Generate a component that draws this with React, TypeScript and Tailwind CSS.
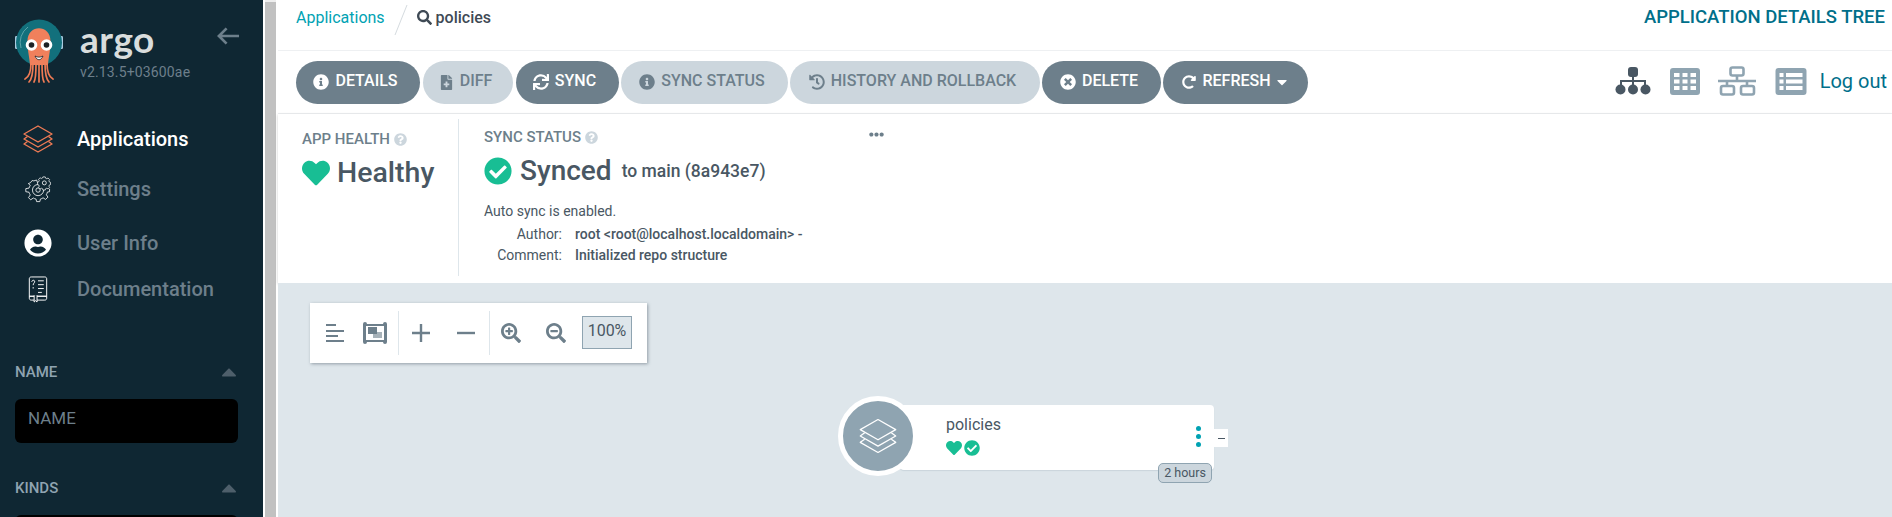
import React from "react";
import { FaInfoCircle, FaFileMedical, FaSync, FaHistory, FaTimesCircle, FaRedoAlt, FaCaretDown, FaSearch, FaHeart, FaCheckCircle, FaUserCircle, FaQuestionCircle, FaCaretUp, FaEllipsisH, FaSearchPlus, FaSearchMinus } from "react-icons/fa";

function Layers({ className, color, sw = 1.4 }: { className?: string; color: string; sw?: number }) {
  return (
    <svg viewBox="0 0 30 30" className={className} fill="none" stroke={color} strokeWidth={sw} strokeLinejoin="round">
      <path d="M15 2 L29 10 L15 18 L1 10 Z" />
      <path d="M4.5 12.5 L1 15 L15 23 L29 15 L25.5 12.5" />
      <path d="M4.5 17.5 L1 20 L15 28 L29 20 L25.5 17.5" />
    </svg>
  );
}

function Logo() {
  return (
    <svg viewBox="0 0 48 64" className="w-[48px] h-[64px] shrink-0">
      <rect x="0" y="17" width="3" height="13" rx="1.2" fill="#a9cbe0" />
      <rect x="45" y="17" width="3" height="13" rx="1.2" fill="#a9cbe0" />
      <circle cx="24" cy="23.5" r="23" fill="#12707c" />
      <path d="M6 29 A19 19 0 0 1 13 8" stroke="#6fb0b5" strokeWidth="0.8" fill="none" />
      <g stroke="#ef7b55" strokeWidth="1.7" fill="none" strokeLinecap="round">
        <path d="M16 44 C16 52 14 58 10 60" />
        <path d="M18 44 C18 54 17 60 14 63" />
        <path d="M21 44 C21 54 21 60 19 63" />
        <path d="M24 44 V63" />
        <path d="M27 44 C27 54 27 60 29 63" />
        <path d="M30 44 C30 54 31 60 34 63" />
        <path d="M32 44 C32 52 34 58 38 60" />
      </g>
      <path d="M12.5 22 C12.5 5 35.5 5 35.5 22 C35.5 32 33.5 38 33 46 H15 C14.5 38 12.5 32 12.5 22 Z" fill="#f0805c" />
      <circle cx="16.5" cy="26" r="5.8" fill="#fff" />
      <circle cx="31.5" cy="26" r="5.8" fill="#fff" />
      <circle cx="16.5" cy="26" r="2.8" fill="#1c2226" />
      <circle cx="31.5" cy="26" r="2.8" fill="#1c2226" />
      <path d="M20 37 C22 42 26 42 28 37 C25.5 38.5 22.5 38.5 20 37 Z" fill="#fff" stroke="#1c2226" strokeWidth="0.8" />
    </svg>
  );
}

function Gear() {
  return (
    <svg viewBox="0 0 30 30" className="w-[27px] h-[28px]" fill="none" stroke="#fff" strokeWidth="0.9" strokeLinejoin="round">
      <path d="M11 6 L14 5 L15 8 C16 8.3 17 8.7 17.6 9.2 L20 8 M4.8 9 L7 11 C6.3 12 5.8 13 5.6 14 L2 14.6 L2 18 L5.6 18.6 C5.9 19.8 6.4 20.8 7 21.6 L5 24.6 L7.4 27 L10.4 25 C11.3 25.6 12.3 26 13.4 26.2 L14 29 L17.6 29 L18.2 26.2 C19.3 25.9 20.3 25.4 21.2 24.8 L24 26.6 L26.6 24 L24.8 21.4 C25.4 20.4 25.8 19.4 26 18.4 L28.4 18 L28.4 14.8" />
      <path d="M11 6 L9 5.6 L7.2 8 L4.8 9" />
      <circle cx="15.6" cy="16.2" r="6.2" />
      <circle cx="15.6" cy="16.2" r="2.4" />
      <path d="M21 1.2 h3 l.4 1.6 1.6 .7 1.5-.9 2 2-.9 1.5 .7 1.6 1.4 .4 v2.8 l-1.4 .4 -.7 1.6 .9 1.5 -2 2 -1.5-.9 -1.6 .7 -.4 1.6 h-3 l-.4-1.6 -1.6-.7 -1.5 .9 -2-2 .9-1.5 -.7-1.6 -1.4-.4 V7.8 l1.4-.4 .7-1.6 -.9-1.5 2-2 1.5 .9 1.6-.7 z" transform="translate(2.5 .5) scale(.88)" fill="#0f2733" />
      <circle cx="22.6" cy="8.2" r="2.2" />
    </svg>
  );
}

function Book() {
  return (
    <svg viewBox="0 0 20 28" className="w-[20px] h-[27px]" fill="none" stroke="#fff" strokeWidth="1">
      <path d="M3 1 H17 C18.5 1 19 2 19 3 V23 C19 24 18.5 25 17 25 H3 C1.5 25 1 24 1 23 V3 C1 2 1.5 1 3 1 Z" />
      <path d="M1 21 H19" strokeWidth="1.4" />
      <path d="M10 5 H16 M10 9 H16 M10 13 H16 M10 17 H14" />
      <path d="M3.5 6 C3.8 3.8 7 4 6.5 6.2 C6.2 7.5 5 7.5 5 9.5 M5 11.5 V13" />
      <path d="M6 20 V27 L7.5 25.6 L9 27 V20" fill="#0f2733" />
    </svg>
  );
}

function Btn({ w, dark, icon, label, trail }: { w: string; dark?: boolean; icon: React.ReactNode; label: string; trail?: React.ReactNode }) {
  return (
    <div className={`${w} h-[43px] rounded-full flex items-center justify-center gap-[6px] text-[16px] font-medium ${dark ? "bg-[#6d7f8b] text-white" : "bg-[#ccd6dd] text-[#6d7f8b]"}`}>
      <span className="text-[16px] flex items-center">{icon}</span>
      <span className="-translate-y-[1px]">{label}</span>
      {trail}
    </div>
  );
}

function Tree() {
  return (
    <svg viewBox="0 0 36 28" className="w-[36px] h-[28px]" fill="#495763">
      <rect x="13" y="0" width="10" height="10" rx="3" />
      <path d="M17 9 H19 V13 H31 V19 H29 V15 H19 V19 H17 V15 H7 V19 H5 V13 H17 Z" />
      <circle cx="5.5" cy="22.5" r="5" /><circle cx="18" cy="22.5" r="5" /><circle cx="30.5" cy="22.5" r="5" />
    </svg>
  );
}

function Net() {
  return (
    <svg viewBox="0 0 38 30" className="w-[38px] h-[30px]" fill="none" stroke="#8fa4b1" strokeWidth="2.6">
      <rect x="12.5" y="1.5" width="13" height="8" rx="2" />
      <path d="M19 9 V15 M0 15 H38 M9 15 V20 M29 15 V20" />
      <rect x="3" y="20" width="13" height="8.5" rx="2" />
      <rect x="23" y="20" width="13" height="8.5" rx="2" />
    </svg>
  );
}

function GridIcon() {
  return (
    <svg viewBox="0 0 30 27" className="w-[30px] h-[27px]" fill="#8fa4b1">
      <path fillRule="evenodd" d="M3 0 H27 A3 3 0 0 1 30 3 V24 A3 3 0 0 1 27 27 H3 A3 3 0 0 1 0 24 V3 A3 3 0 0 1 3 0 Z M4 5 V9 H9.5 V5 Z M12.5 5 V9 H17.5 V5 Z M20.5 5 V9 H26 V5 Z M4 11.5 V15.5 H9.5 V11.5 Z M12.5 11.5 V15.5 H17.5 V11.5 Z M20.5 11.5 V15.5 H26 V11.5 Z M4 18 V22 H9.5 V18 Z M12.5 18 V22 H17.5 V18 Z M20.5 18 V22 H26 V18 Z" />
    </svg>
  );
}

function ListIcon() {
  return (
    <svg viewBox="0 0 31 27" className="w-[32px] h-[27px]" fill="#8fa4b1">
      <path fillRule="evenodd" d="M3 0 H28 A3 3 0 0 1 31 3 V24 A3 3 0 0 1 28 27 H3 A3 3 0 0 1 0 24 V3 A3 3 0 0 1 3 0 Z M4 5 V9 H8 V5 Z M10.5 5 V9 H27 V5 Z M4 11.5 V15.5 H8 V11.5 Z M10.5 11.5 V15.5 H27 V11.5 Z M4 18 V22 H8 V18 Z M10.5 18 V22 H27 V18 Z" />
    </svg>
  );
}

export default function App() {
  const roboto = { fontFamily: "Roboto, sans-serif" };
  return (
    <div style={roboto} className="w-[1892px] h-[517px] overflow-hidden flex bg-white text-[#495763]">
      <aside className="w-[263px] shrink-0 h-full bg-[#0f2733] pl-[15px] overflow-hidden">
        <div className="flex pt-[19px] h-[115px]">
          <Logo />
          <div className="ml-[17px] w-[122px]">
            <div style={{ fontFamily: "Lato, sans-serif" }} className="text-[37px] leading-[40px] font-bold text-[#d9dddd] tracking-[.5px]">argo</div>
            <div className="text-[14px] leading-[16px] text-[#6d7f8b] mt-[5px] tracking-[.15px] whitespace-nowrap">v2.13.5+03600ae</div>
          </div>
          <svg viewBox="0 0 24 18" className="w-[23px] h-[18px] ml-[15px] mt-[8px]" fill="none" stroke="#6d7f8b" strokeWidth="2.8"><path d="M23 9 H2 M10 1 L2 9 L10 17" /></svg>
        </div>
        <nav className="text-[20px] font-medium leading-[24px]">
          <div className="h-[48px] flex items-center text-white"><span className="w-[62px] pl-[8px]"><Layers className="w-[30px] h-[30px]" color="#ef7b55" /></span>Applications</div>
          <div className="h-[52px] flex items-center text-[#6d7f8b]"><span className="w-[62px] pl-[9px]"><Gear /></span>Settings</div>
          <div className="h-[54px] flex items-center text-[#6d7f8b] mt-[1px]"><span className="w-[62px] pl-[9px]"><FaUserCircle className="text-[28px] text-white" /></span>User Info</div>
          <div className="h-[38px] flex items-center text-[#6d7f8b]"><span className="w-[62px] pl-[13px]"><Book /></span>Documentation</div>
        </nav>
        <div className="w-[223px] mt-[54px]">
          <div className="flex justify-between items-center h-[20px] text-[15px] font-medium text-[#8fa4b1]"><span>NAME</span><FaCaretUp className="text-[#4e5f6b] text-[24px] -mr-[3px]" /></div>
          <input readOnly placeholder="NAME" className="mt-[17px] w-full h-[44px] rounded-[6px] bg-black pl-[13px] pb-[6px] text-[17px] outline-none placeholder:text-[#6d7f8b]" />
          <div className="mt-[35px] flex justify-between items-center h-[20px] text-[15px] font-medium text-[#8fa4b1]"><span>KINDS</span><FaCaretUp className="text-[#4e5f6b] text-[24px] -mr-[3px]" /></div>
          <div className="mt-[17px] h-[44px] rounded-[6px] bg-black" />
        </div>
      </aside>
      <div className="w-[2px] bg-white shrink-0" />
      <div className="w-[11px] bg-[#c1c1c1] shrink-0 border-t-[2px] border-[#eee]" />
      <div className="w-[2px] bg-white shrink-0" />
      <main className="flex-1 min-w-0 flex flex-col">
        <header className="h-[51px] shrink-0 border-b border-[#eef0f2] flex justify-between pl-[18px] pr-[7px]">
          <div className="flex items-start h-[36px] text-[16px] leading-[35px]">
            <span className="text-[#00a2b3]">Applications</span>
            <svg viewBox="0 0 14 32" className="w-[14px] h-[32px] ml-[9px] mr-[9px] mt-[4px]"><path d="M13 1 L1 31" stroke="#d5dbdf" strokeWidth="1" /></svg>
            <FaSearch className="text-[15px] text-[#3f4a55] mt-[10px]" />
            <span className="ml-[4px] text-[#3f4a55] font-medium text-[16px]">policies</span>
          </div>
          <div className="text-[18.5px] font-medium text-[#006f8a] leading-[34px] whitespace-nowrap">APPLICATION DETAILS TREE</div>
        </header>
        <div className="h-[63px] shrink-0 border-b border-[#eef0f2] flex items-center pl-[18px] pr-[5px]">
          <div className="flex items-center gap-[2px] flex-1">
            <Btn w="w-[124px] mr-[1px] pr-[5px]" dark icon={<FaInfoCircle />} label="DETAILS" />
            <Btn w="w-[90px] mr-[1px] pr-[5px]" icon={<FaFileMedical className="text-[15px]" />} label="DIFF" />
            <Btn w="w-[103px] pr-[6px]" dark icon={<FaSync />} label="SYNC" />
            <Btn w="w-[167px] pr-[5px]" icon={<FaInfoCircle />} label="SYNC STATUS" />
            <Btn w="w-[250px] pr-[5px]" icon={<FaHistory />} label="HISTORY AND ROLLBACK" />
            <Btn w="w-[119px] pr-[5px]" dark icon={<FaTimesCircle />} label="DELETE" />
            <Btn w="w-[145px] pl-[1px]" dark icon={<FaRedoAlt className="text-[14px]" />} label="REFRESH" trail={<FaCaretDown className="text-[16px] -ml-[3px]" />} />
          </div>
          <div className="flex items-center -translate-y-[1px]">
            <Tree />
            <span className="ml-[19px] flex"><GridIcon /></span>
            <span className="ml-[18px] flex"><Net /></span>
            <span className="ml-[19px] flex"><ListIcon /></span>
            <span className="ml-[13px] text-[20px] text-[#006f8a]">Log out</span>
          </div>
        </div>
        <section className="h-[169px] shrink-0 flex pl-[24px] pt-[5px] shadow-[0_1px_3px_rgba(0,0,0,.2)] relative">
          <div className="w-[157px] h-[157px] border-r border-[#dee6eb] pt-[9px]">
            <div className="flex items-center gap-[4px] text-[15px] font-medium text-[#6d7f8b] leading-[22px]">APP HEALTH <FaQuestionCircle className="text-[13px] text-[#ccd6dd]" /></div>
            <div className="flex items-center mt-[6px] text-[28.5px] font-medium leading-[34px]"><FaHeart className="text-[#18be94] text-[28px] mr-[7px]" />Healthy</div>
          </div>
          <div className="pl-[25px] pt-[7px] w-[430px] relative">
            <div className="flex items-center gap-[4px] text-[15px] font-medium text-[#6d7f8b] leading-[22px]">SYNC STATUS <FaQuestionCircle className="text-[13px] text-[#ccd6dd]" /></div>
            <FaEllipsisH className="absolute left-[410px] top-[8px] text-[15px] text-[#6d7f8b]" />
            <div className="flex items-center mt-[5px] leading-[36px]">
              <FaCheckCircle className="text-[#18be94] text-[28px] mr-[8px]" />
              <span className="text-[28px] font-medium">Synced</span>
              <span className="text-[17.5px] font-medium ml-[10px]">to main (8a943e7)</span>
            </div>
            <div className="text-[14px] leading-[20px] mt-[12px]">Auto sync is enabled.</div>
            <div className="grid grid-cols-[78px_1fr] gap-x-[13px] text-[14px] leading-[21px] mt-[3px]">
              <span className="text-right">Author:</span><span className="font-medium whitespace-nowrap">root &lt;root@localhost.localdomain&gt; -</span>
              <span className="text-right">Comment:</span><span className="font-medium">Initialized repo structure</span>
            </div>
          </div>
        </section>
        <section className="flex-1 bg-[#dee6eb] relative pl-[32px] pt-[20px]">
          <div className="w-[337px] h-[60px] bg-white shadow-[1px_1px_3px_rgba(73,87,99,.5)] flex items-center text-[#6d7f8b]">
            <svg viewBox="0 0 18 20" className="ml-[16px] w-[18px] h-[20px]" fill="none" stroke="#6d7f8b" strokeWidth="2"><path d="M0 2 H10 M0 8 H18 M0 13 H12 M0 18 H18" /></svg>
            <svg viewBox="0 0 24 22" className="w-[24px] h-[22px] ml-[19px]" fill="#6d7f8b"><path fillRule="evenodd" d="M0 2 A2 2 0 0 1 4 2 H20 A2 2 0 0 1 24 2 V20 A2 2 0 0 1 20 20 H4 A2 2 0 0 1 0 20 Z M3 4 V18 H21 V4 Z" /><rect x="5" y="5" width="9" height="7" /><rect x="10" y="10" width="9" height="6" opacity=".6" /></svg>
            <div className="w-px h-[44px] bg-[#dee6eb] ml-[11px]" />
            <svg viewBox="0 0 18 18" className="ml-[13px] w-[18px] h-[18px]" fill="none" stroke="#6d7f8b" strokeWidth="2.4"><path d="M0 9 H18 M9 0 V18" /></svg>
            <svg viewBox="0 0 18 18" className="ml-[27px] w-[18px] h-[18px]" fill="none" stroke="#6d7f8b" strokeWidth="2.4"><path d="M0 9 H18" /></svg>
            <div className="w-px h-[44px] bg-[#dee6eb] ml-[14px]" />
            <FaSearchPlus className="ml-[11px] text-[20px]" />
            <FaSearchMinus className="ml-[25px] text-[20px]" />
            <div className="ml-[16px] w-[50px] h-[33px] bg-[#dee6eb] border border-[#8fa4b1] flex items-center justify-center text-[16px] text-[#495763] -mt-[1px] pb-[3px]">100%</div>
          </div>
          <div className="absolute left-[622px] top-[122px] w-[314px] h-[65px] bg-white rounded-[4px] shadow-[0_1px_1px_rgba(143,164,177,.25)]">
            <div className="absolute left-[46px] top-[10px] text-[16px] text-[#495763] leading-[20px]">policies</div>
            <div className="absolute left-[46px] top-[35px] flex items-center gap-[2px]"><FaHeart className="text-[#18be94] text-[16px]" /><FaCheckCircle className="text-[#18be94] text-[16px]" /></div>
            <div className="absolute right-[13px] top-[21px] flex flex-col gap-[3px]">
              <span className="w-[5px] h-[5px] rounded-full bg-[#00a2b3]" /><span className="w-[5px] h-[5px] rounded-full bg-[#00a2b3]" /><span className="w-[5px] h-[5px] rounded-full bg-[#00a2b3]" />
            </div>
            <div className="absolute -right-[14px] top-[24px] w-[14px] h-[18px] bg-white flex items-center justify-center"><span className="w-[7px] h-px bg-[#495763]" /></div>
            <div className="absolute right-[2px] top-[58px] w-[54px] h-[20px] rounded-[5px] bg-[#ccd6dd] border border-[#8fa4b1] flex items-center justify-center text-[12.5px] text-[#495763]">2 hours</div>
          </div>
          <div className="absolute left-[560px] top-[113px] w-[80px] h-[80px] rounded-full bg-[#8fa4b1] border-[5px] border-white flex items-center justify-center">
            <Layers className="w-[38px] h-[38px]" color="#fff" sw={1} />
          </div>
        </section>
      </main>
    </div>
  );
}
